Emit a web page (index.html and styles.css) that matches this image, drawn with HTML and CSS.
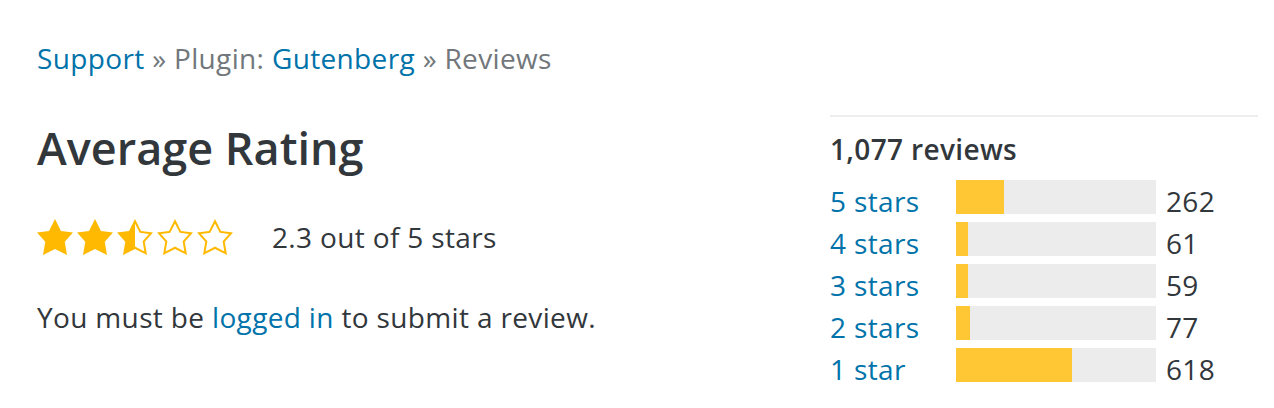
FILE: index.html
```html
<!DOCTYPE html>
<html lang="en">
<head>
<meta charset="utf-8">
<title>Reviews</title>
<link rel="stylesheet" href="styles.css">
</head>
<body>
<div class="page">
  <nav class="crumbs"><a href="#">Support</a> » Plugin: <a href="#">Gutenberg</a> » Reviews</nav>
  <div class="content">
    <main class="main">
      <h2 class="title">Average Rating</h2>
      <div class="rating">
        <div class="stars">
          <svg class="star" viewBox="1 1 18 18"><path d="M10 1l3 6 6 .75-4.12 4.62L16 19l-6-3-6 3 1.13-6.63L1 7.75 7 7z"/></svg>
          <svg class="star" viewBox="1 1 18 18"><path d="M10 1l3 6 6 .75-4.12 4.62L16 19l-6-3-6 3 1.13-6.63L1 7.75 7 7z"/></svg>
          <svg class="star" viewBox="1 1 18 18"><path fill-rule="evenodd" d="M10 1L7 7l-6 .75 4.13 4.62L4 19l6-3 6 3-1.12-6.63L19 7.75 13 7zM10 3.24l2.34 4.69 4.65.58-3.18 3.56.87 5.15L10 14.71z"/></svg>
          <svg class="star" viewBox="1 1 18 18"><path fill-rule="evenodd" d="M10 1L7 7l-6 .75 4.13 4.62L4 19l6-3 6 3-1.12-6.63L19 7.75 13 7zM10 3.24l2.34 4.69 4.65.58-3.18 3.56.87 5.15L10 14.71l-4.68 2.51.87-5.15-3.18-3.56 4.65-.58z"/></svg>
          <svg class="star" viewBox="1 1 18 18"><path fill-rule="evenodd" d="M10 1L7 7l-6 .75 4.13 4.62L4 19l6-3 6 3-1.12-6.63L19 7.75 13 7zM10 3.24l2.34 4.69 4.65.58-3.18 3.56.87 5.15L10 14.71l-4.68 2.51.87-5.15-3.18-3.56 4.65-.58z"/></svg>
        </div>
        <span class="score">2.3 out of 5 stars</span>
      </div>
      <p class="note">You must be <a href="#">logged in</a> to submit a review.</p>
    </main>
    <aside class="side">
      <h3 class="count">1,077 reviews</h3>
      <ul class="bars">
        <li class="row"><a class="label" href="#">5 stars</a><span class="track"><span class="fill" style="width:48px"></span></span><span class="num">262</span></li>
        <li class="row"><a class="label" href="#">4 stars</a><span class="track"><span class="fill" style="width:12px"></span></span><span class="num">61</span></li>
        <li class="row"><a class="label" href="#">3 stars</a><span class="track"><span class="fill" style="width:12px"></span></span><span class="num">59</span></li>
        <li class="row"><a class="label" href="#">2 stars</a><span class="track"><span class="fill" style="width:14px"></span></span><span class="num">77</span></li>
        <li class="row"><a class="label" href="#">1 star</a><span class="track"><span class="fill" style="width:116px"></span></span><span class="num">618</span></li>
      </ul>
    </aside>
  </div>
</div>
</body>
</html>
```
FILE: styles.css
```css
html, body {
  margin: 0;
  padding: 0;
  background: #fff;
}
body {
  font-family: "Open Sans", "DejaVu Sans", sans-serif;
  font-size: 28px;
  line-height: 42px;
  letter-spacing: 0.35px;
  color: #32373c;
}
a {
  color: #0073aa;
  text-decoration: none;
}
.page {
  padding: 37px 16px 0 37px;
}
.crumbs {
  color: #72777c;
}
.content {
  display: flex;
  margin-top: 36px;
}
.main {
  flex: 1;
}
.title {
  margin: 6px 0 0;
  font-size: 45px;
  line-height: 54px;
  font-weight: 600;
  letter-spacing: 0;
  color: #32373c;
}
.rating {
  display: flex;
  align-items: center;
  height: 42px;
  margin-top: 41px;
}
.stars {
  display: flex;
  gap: 4px;
}
.star {
  width: 36px;
  height: 36px;
  fill: #ffb900;
  display: block;
}
.score {
  margin-left: 39px;
}
.note {
  margin: 38px 0 0;
}
.side {
  width: 428px;
  border-top: 2px solid #eee;
}
.count {
  margin: 11px 0 0;
  font-size: 28px;
  line-height: 42px;
  font-weight: 600;
}
.bars {
  list-style: none;
  margin: 10px 0 0;
  padding: 0;
}
.row {
  display: flex;
  align-items: flex-start;
  height: 42px;
}
.label {
  width: 126px;
}
.track {
  width: 200px;
  height: 34px;
  background: #ececec;
  display: block;
}
.fill {
  display: block;
  height: 100%;
  background: #ffc733;
}
.num {
  margin-left: 10px;
}
```
